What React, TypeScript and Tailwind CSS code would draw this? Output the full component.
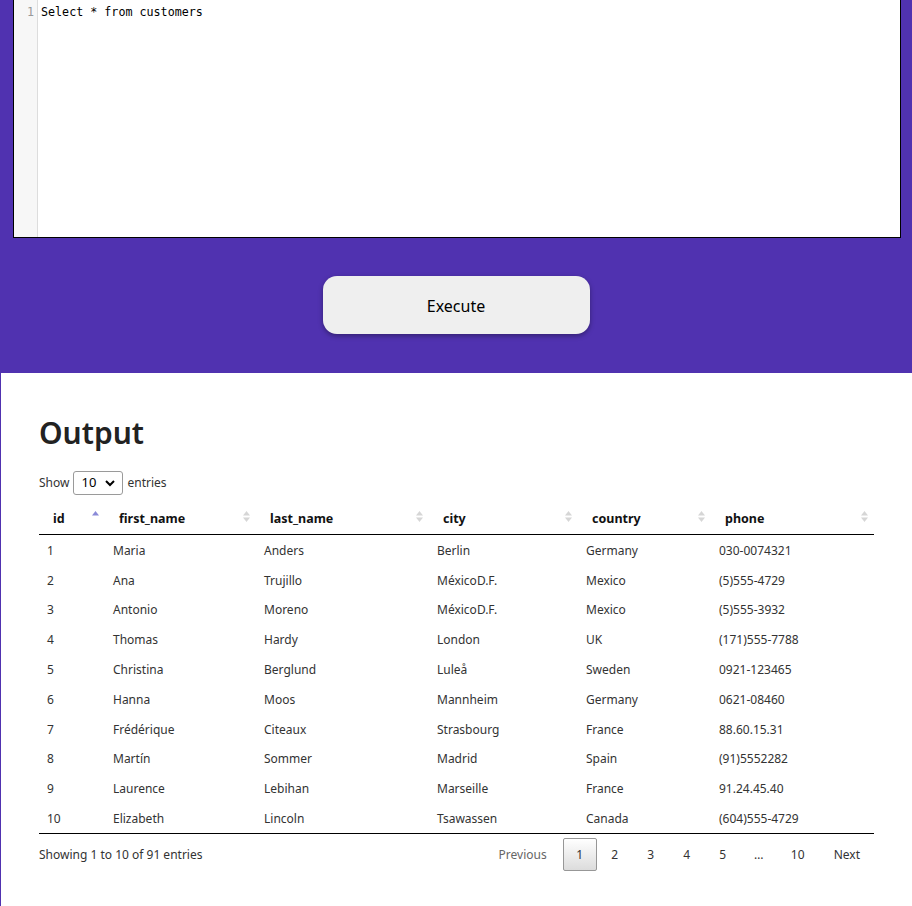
import React from "react";

const rows = [
  ["1", "Maria", "Anders", "Berlin", "Germany", "030-0074321"],
  ["2", "Ana", "Trujillo", "MéxicoD.F.", "Mexico", "(5)555-4729"],
  ["3", "Antonio", "Moreno", "MéxicoD.F.", "Mexico", "(5)555-3932"],
  ["4", "Thomas", "Hardy", "London", "UK", "(171)555-7788"],
  ["5", "Christina", "Berglund", "Luleå", "Sweden", "0921-123465"],
  ["6", "Hanna", "Moos", "Mannheim", "Germany", "0621-08460"],
  ["7", "Frédérique", "Citeaux", "Strasbourg", "France", "88.60.15.31"],
  ["8", "Martín", "Sommer", "Madrid", "Spain", "(91)5552282"],
  ["9", "Laurence", "Lebihan", "Marseille", "France", "91.24.45.40"],
  ["10", "Elizabeth", "Lincoln", "Tsawassen", "Canada", "(604)555-4729"],
];

const cols = [
  { name: "id", w: "w-[66px]" },
  { name: "first_name", w: "w-[151px]" },
  { name: "last_name", w: "w-[173px]" },
  { name: "city", w: "w-[149px]" },
  { name: "country", w: "w-[133px]" },
  { name: "phone", w: "w-[163px]" },
];

function SortIcon({ active }: { active?: boolean }) {
  return (
    <svg width="7" height="12" viewBox="0 0 7 12" className="absolute right-[6px] top-[5px]">
      <polygon points="3.5,0 7,4.5 0,4.5" fill={active ? "#8a8ad8" : "#d6d6d6"} />
      {!active && <polygon points="3.5,11 7,6.5 0,6.5" fill="#d6d6d6" />}
    </svg>
  );
}

export default function App() {
  return (
    <div className="w-[912px] min-h-[906px] bg-white font-['Noto_Sans',sans-serif] text-[#222]">
      <div className="bg-[#5032b0] pl-[13px] pr-[11px] pb-[39px]">
        <div className="h-[238px] border border-black border-t-0 bg-white flex">
          <div className="w-[24px] bg-[#f7f7f7] border-r border-[#dddddd] flex justify-end pr-[3px] pt-[4px]">
            <span className="font-['DejaVu_Sans_Mono',monospace] text-[11.7px] leading-[16px] text-[#999]">1</span>
          </div>
          <div className="pl-[3px] pt-[4px] font-['DejaVu_Sans_Mono',monospace] text-[11.7px] leading-[16px] text-black">
            Select * from customers
          </div>
        </div>
        <div className="flex justify-center pt-[38px] pr-[2px]">
          <button className="w-[267px] h-[58px] rounded-[14px] bg-[#efefef] text-[16px] leading-[20px] pt-[2px] text-black shadow-[0_2px_5px_rgba(0,0,0,0.35)]">
            Execute
          </button>
        </div>
      </div>
      <div className="border-l border-[#5032b0] pl-[38px] pr-[38px] pt-[40px] pb-[40px]">
        <h1 className="text-[30px] font-semibold leading-[40px] text-[#222]">Output</h1>
        <div className="mt-[18px] flex items-center text-[12px] text-[#333]">
          <span>Show</span>
          <div className="ml-[4px] mr-[4px] w-[50px] h-[24px] border border-[#9a9a9a] rounded-[3px] flex items-center justify-between px-[7px]">
            <span className="text-[13px] text-black">10</span>
            <svg width="10" height="7" viewBox="0 0 10 7">
              <path d="M1 1 L5 5 L9 1" stroke="#000" strokeWidth="2" fill="none" />
            </svg>
          </div>
          <span>entries</span>
        </div>
        <table className="mt-[11px] w-[835px] border-collapse text-[12px] table-fixed">
          <thead>
            <tr className="border-b border-black">
              {cols.map((c, i) => (
                <th key={c.name} className={`${c.w} h-[28px] relative text-left font-bold pl-[14px] pr-[18px] pt-0 pb-[1px] text-[12.5px] text-[#111]`}>
                  {c.name}
                  <SortIcon active={i === 0} />
                </th>
              ))}
            </tr>
          </thead>
          <tbody className="text-[#333]">
            {rows.map((r, i) => (
              <tr key={i} className={i === rows.length - 1 ? "border-b border-black" : ""}>
                {r.map((v, j) => (
                  <td key={j} className={`pl-[8px] pr-[10px] align-middle ${i === 0 ? "h-[31.8px] pt-[2px]" : "h-[29.8px]"}`}>
                    {v}
                  </td>
                ))}
              </tr>
            ))}
          </tbody>
        </table>
        <div className="flex items-center justify-between w-[835px] mt-[4px] text-[12px] text-[#333]">
          <span>Showing 1 to 10 of 91 entries</span>
          <div className="flex items-center mr-[14px]">
            <span className="px-[8px] text-[#666]">Previous</span>
            <span className="ml-[8px] w-[34px] h-[33px] flex items-center justify-center border border-[#979797] rounded-[2px] bg-gradient-to-b from-white to-[#dcdcdc]">1</span>
            {["2", "3", "4", "5"].map((p) => (
              <span key={p} className="w-[36px] h-[33px] flex items-center justify-center">{p}</span>
            ))}
            <span className="w-[36px] h-[33px] flex items-center justify-center">…</span>
            <span className="w-[42px] h-[33px] flex items-center justify-center">10</span>
            <span className="pl-[15px]">Next</span>
          </div>
        </div>
      </div>
    </div>
  );
}
